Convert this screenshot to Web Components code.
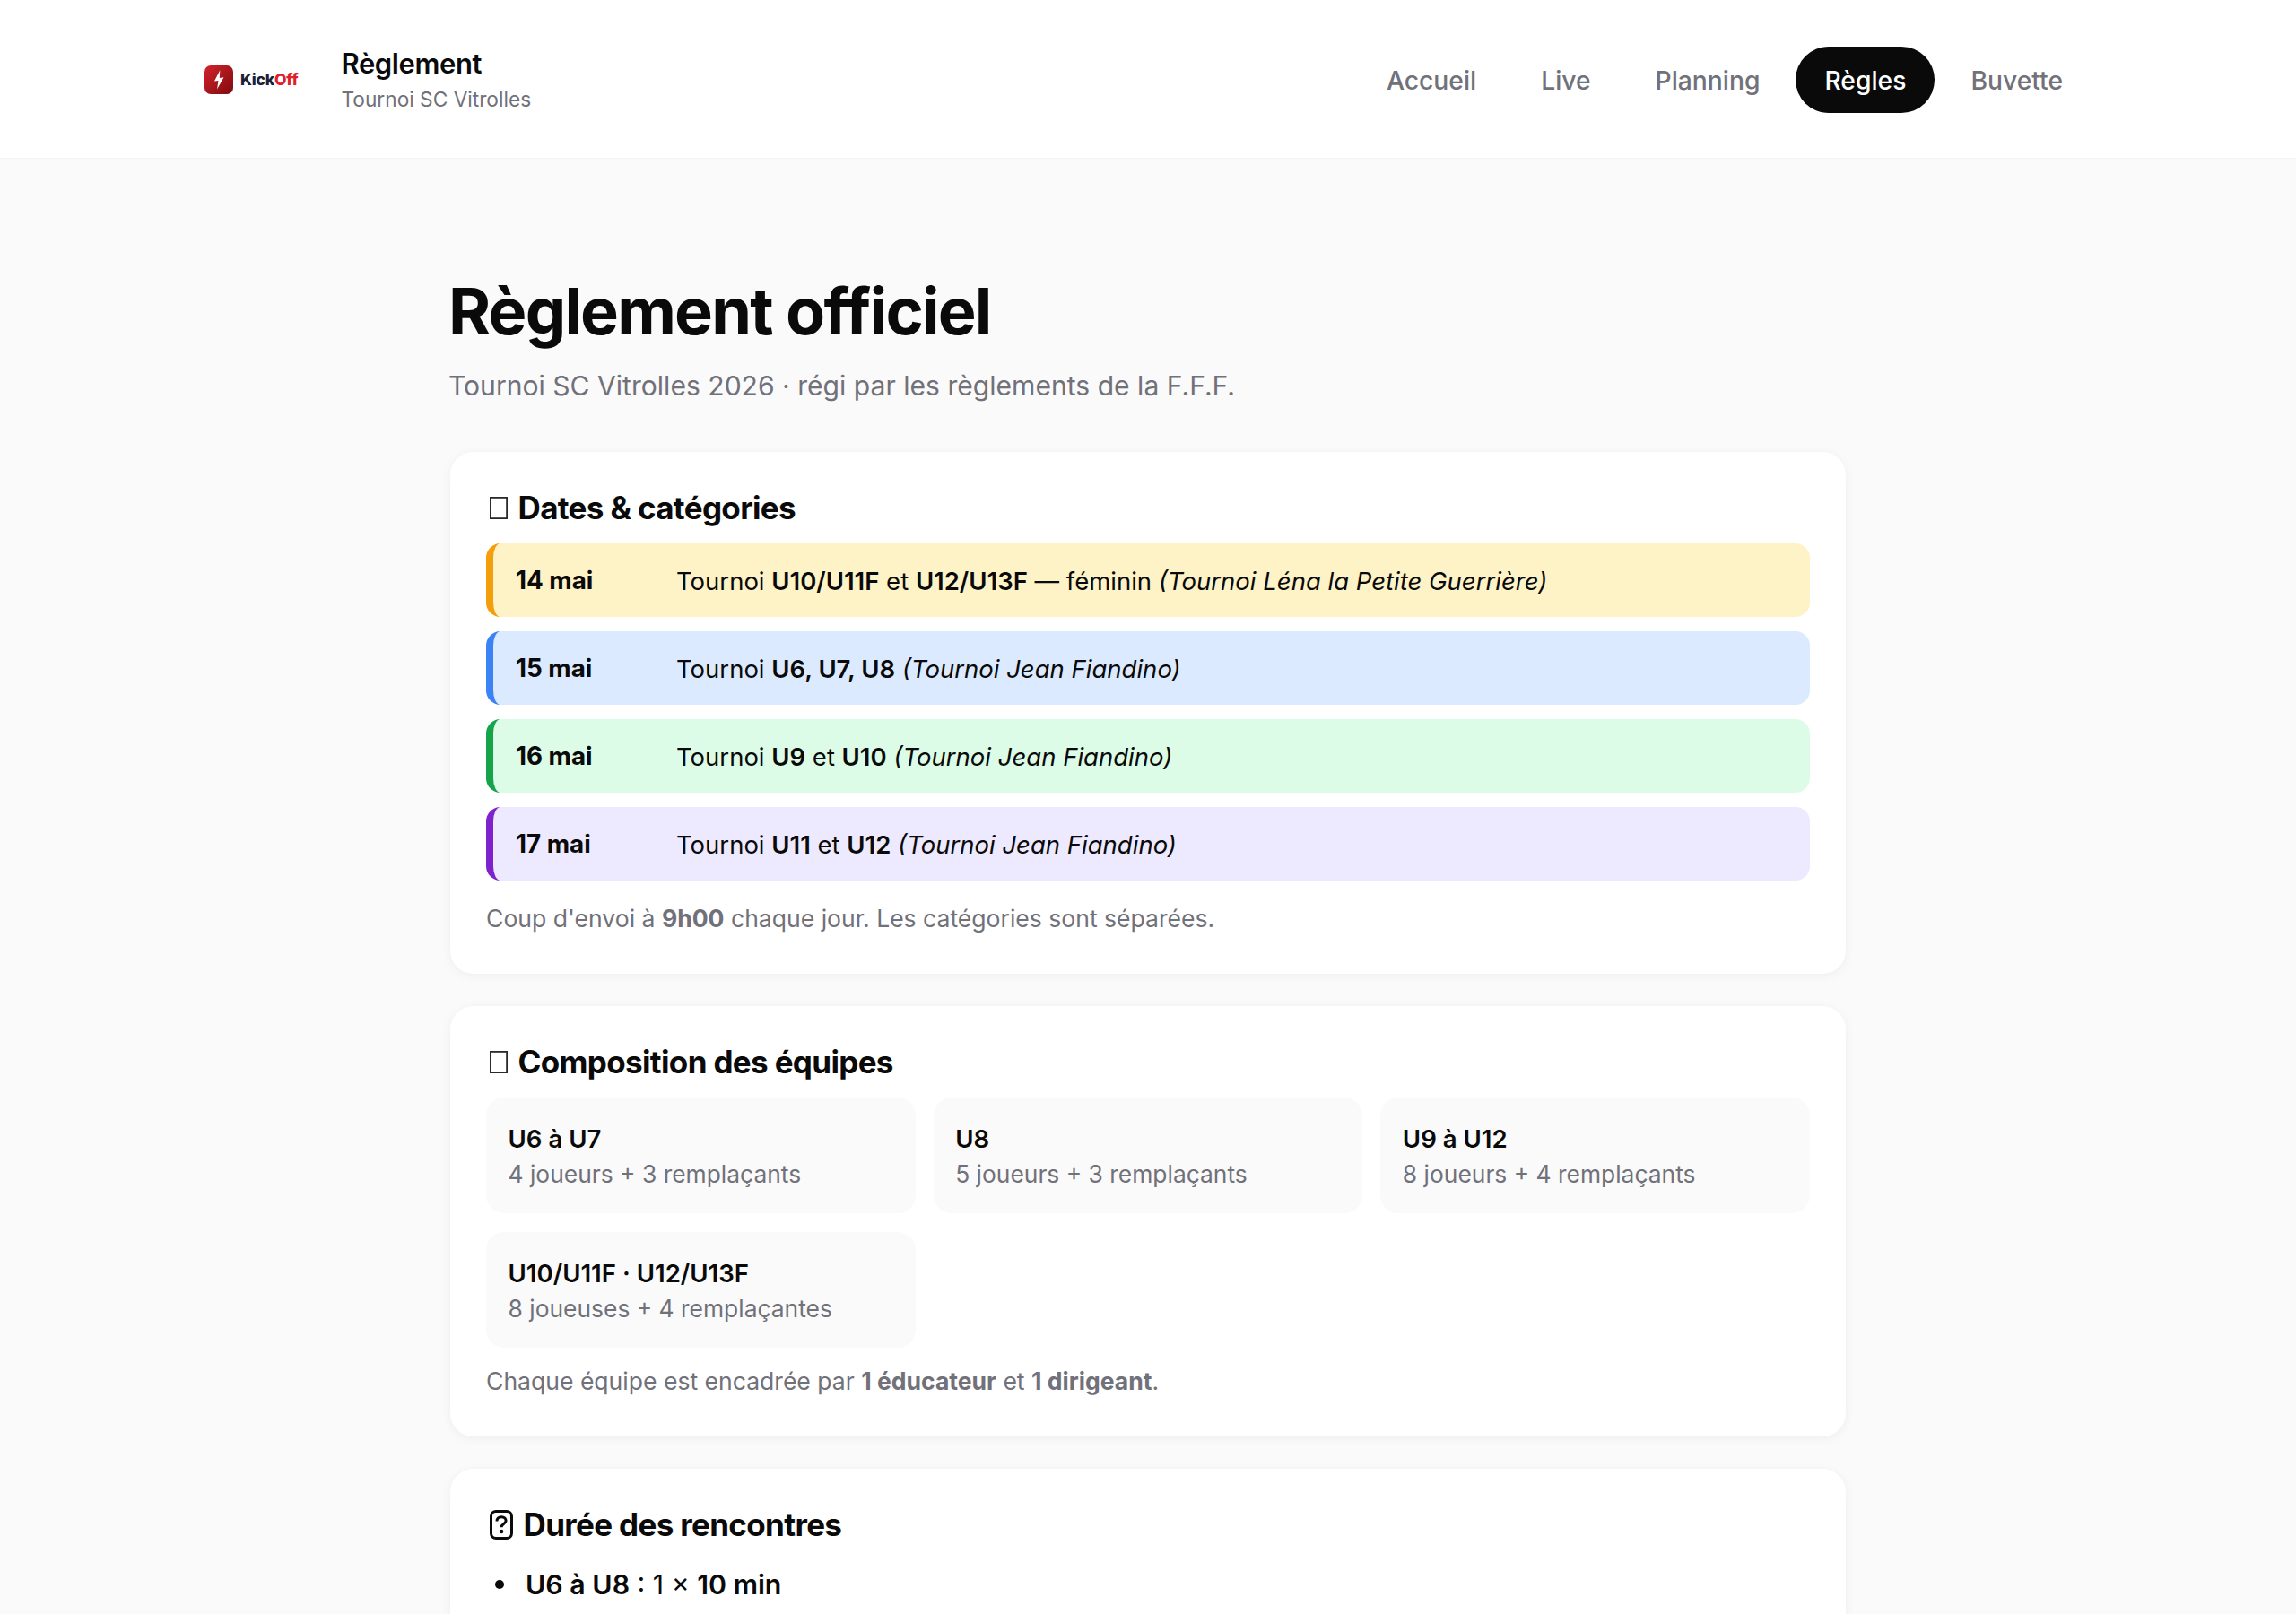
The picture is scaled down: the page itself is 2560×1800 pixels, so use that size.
<!DOCTYPE html>
<html lang="fr"><head><meta charset="utf-8"><title>Règlement</title>
<style>
html,body{margin:0;padding:0;height:1800px;overflow:hidden;background:#fafafa}
body{font-family:Inter,"Liberation Sans",sans-serif;color:#0a0a0a}
</style></head><body>
<app-header></app-header>
<rules-page>
  <rules-card icon="box" heading="Dates &amp; catégories">
    <date-list>
      <date-row accent="#f59e0b" bg="#fef3c7" date="14 mai">Tournoi <b>U10/U11F</b> et <b>U12/U13F</b> — féminin <i>(Tournoi Léna la Petite Guerrière)</i></date-row>
      <date-row accent="#3b82f6" bg="#dbeafe" date="15 mai">Tournoi <b>U6, U7, U8</b> <i>(Tournoi Jean Fiandino)</i></date-row>
      <date-row accent="#16a34a" bg="#dcfce7" date="16 mai">Tournoi <b>U9</b> et <b>U10</b> <i>(Tournoi Jean Fiandino)</i></date-row>
      <date-row accent="#7e22ce" bg="#ede9fe" date="17 mai">Tournoi <b>U11</b> et <b>U12</b> <i>(Tournoi Jean Fiandino)</i></date-row>
    </date-list>
    <card-note>Coup d'envoi à <b>9h00</b> chaque jour. Les catégories sont séparées.</card-note>
  </rules-card>
  <rules-card icon="box" heading="Composition des équipes">
    <team-grid>
      <team-tile name="U6 à U7">4 joueurs + 3 remplaçants</team-tile>
      <team-tile name="U8">5 joueurs + 3 remplaçants</team-tile>
      <team-tile name="U9 à U12">8 joueurs + 4 remplaçants</team-tile>
      <team-tile name="U10/U11F · U12/U13F">8 joueuses + 4 remplaçantes</team-tile>
    </team-grid>
    <card-note>Chaque équipe est encadrée par <b>1 éducateur</b> et <b>1 dirigeant</b>.</card-note>
  </rules-card>
  <rules-card icon="q" heading="Durée des rencontres" gap="23">
    <rule-item><b>U6 à U8</b> : 1 × <b>10 min</b></rule-item>
  </rules-card>
</rules-page>
<script>
function def(name,html){
  customElements.define(name,class extends HTMLElement{
    connectedCallback(){
      if(this.shadowRoot)return;
      const r=this.attachShadow({mode:'open'});
      r.innerHTML=typeof html==='function'?html(this):html;
    }
  });
}
const ICONS={
 box:`<svg width="20" height="25" viewBox="0 0 20 25"><rect x=".9" y=".9" width="18.200" height="23.200" fill="none" stroke="#2a2a2a" stroke-width="1.800"/></svg>`,
 q:`<svg width="26" height="33" viewBox="0 0 26 33"><rect x="1.500" y="1.500" width="23" height="30" rx="5.500" fill="none" stroke="#0a0a0a" stroke-width="3"/><path d="M8 12.500c0-3 2.200-4.800 5.100-4.800s5 1.800 5 4.300c0 3.600-5 3.500-5 7.200" fill="none" stroke="#0a0a0a" stroke-width="3"/><circle cx="13.100" cy="24" r="2.200" fill="#0a0a0a"/></svg>`
};
def('app-header',`<style>
:host{display:flex;align-items:center;justify-content:space-between;height:174px;padding:2px 228px 0;background:#fff;border-bottom:1px solid #f4f4f5}
.left{display:flex;align-items:center;gap:48px}
.logo{display:flex;align-items:center;gap:8px}
.name{font:800 17.500px/1 Inter,sans-serif;letter-spacing:-.2px;color:#1a2238}
.name span{color:#e0202a}
h1{margin:0;font:600 31px/36px Inter,sans-serif;letter-spacing:-.4px;color:#0a0a0a}
p{margin:8px 0 0;font:400 22.700px/28px Inter,sans-serif;color:#71717a}
nav{display:flex;gap:8px}
a{display:block;padding:0 32px;height:74px;border-radius:37px;font:500 28.250px/76px Inter,sans-serif;color:#71717a}
a.on{background:#0a0a0a;color:#fff}
</style>
<div class="left"><div class="logo">
<svg width="32" height="32" viewBox="0 0 32 32"><defs><linearGradient id="g" x1="0" y1="0" x2="1" y2="1"><stop offset="0" stop-color="#d4222a"/><stop offset="1" stop-color="#7e0b10"/></linearGradient></defs><rect width="32" height="32" rx="7" fill="url(#g)"/><path d="M17.300 5.300 11 17.500l4.500-.5L14 26.500l7.500-13.200-4.700.7z" fill="#fff"/></svg>
<div class="name">Kick<span>Off</span></div></div>
<div><h1>Règlement</h1><p>Tournoi SC Vitrolles</p></div></div>
<nav><a>Accueil</a><a>Live</a><a>Planning</a><a class="on">Règles</a><a>Buvette</a></nav>`);
def('rules-page',`<style>
:host{display:block;width:1560px;margin:0 auto;padding-top:130px}
h1{margin:0;font:700 72px/79px Inter,sans-serif;letter-spacing:-1.800px;color:#0a0a0a}
p{margin:21.500px 0 52.500px;font:400 30.100px/44px Inter,sans-serif;color:#71717a}
.stack{display:flex;flex-direction:column;gap:36px;padding:0 2px}
</style><h1>Règlement officiel</h1><p>Tournoi SC Vitrolles 2026 · régi par les règlements de la F.F.F.</p><div class="stack"><slot></slot></div>`);
def('rules-card',el=>`<style>
:host{display:block;box-sizing:border-box;background:#fff;border-radius:26px;padding:40px;box-shadow:0 2px 12px rgba(0,0,0,.05)}
h2{display:flex;align-items:center;gap:12px;margin:0 0 ${el.getAttribute('gap')||18}px;padding-left:3.500px;font:700 35px/44px Inter,sans-serif;letter-spacing:-.65px;color:#0a0a0a}
svg{flex:none}
</style><h2>${ICONS[el.getAttribute('icon')]}<span>${el.getAttribute('heading').replace('&','&amp;')}</span></h2><slot></slot>`);
def('date-list',`<style>:host{display:flex;flex-direction:column;gap:16px;margin-bottom:24px}</style><slot></slot>`);
def('date-row',el=>`<style>
:host{display:flex;align-items:center;box-sizing:border-box;height:82px;padding-left:25px;border-left:8px solid ${el.getAttribute('accent')};background:${el.getAttribute('bg')};border-radius:16px;font:400 27.500px/40px Inter,sans-serif;color:#0a0a0a}
.d{flex:0 0 179px;font-size:27.800px;font-weight:700}
.t{padding-top:1.500px}
::slotted(b){font-weight:600}
</style><div class="d">${el.getAttribute('date')}</div><div class="t"><slot></slot></div>`);
def('card-note',`<style>:host{display:block;font:400 26.550px/37px Inter,sans-serif;padding-bottom:3px;color:#71717a}::slotted(b){font-weight:700}</style><slot></slot>`);
def('team-grid',`<style>:host{display:grid;grid-template-columns:repeat(3,1fr);gap:21px 20px;margin-bottom:19px}</style><slot></slot>`);
def('team-tile',el=>`<style>
:host{display:block;box-sizing:border-box;height:129px;background:#fafafa;border-radius:20px;padding:26.500px 24.500px 0}
b{display:block;font:600 27.600px/38px Inter,sans-serif;color:#0a0a0a}
span{display:block;margin-top:1px;font:400 26.400px/38px Inter,sans-serif;color:#71717a}
</style><b>${el.getAttribute('name')}</b><span><slot></slot></span>`);
def('rule-item',`<style>
:host{display:flex;align-items:center;gap:24px;padding-left:10px;font:400 30.300px/44px Inter,sans-serif;color:#0a0a0a}
i{flex:none;width:10px;height:10px;border-radius:50%;background:#0a0a0a}
::slotted(b){font-weight:600}
</style><i></i><div><slot></slot></div>`);
</script>
</body></html>
